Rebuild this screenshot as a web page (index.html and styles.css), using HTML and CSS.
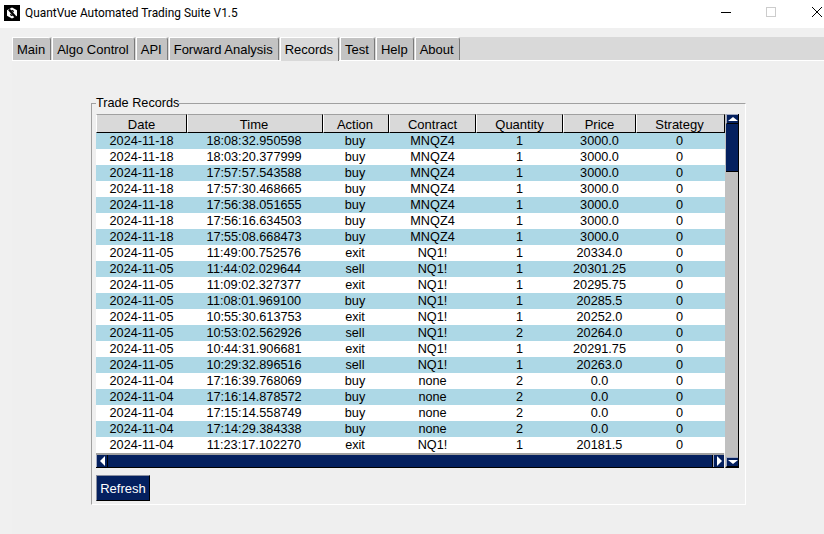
FILE: index.html
```html
<!DOCTYPE html>
<html lang="en">
<head>
<meta charset="utf-8">
<title>QuantVue Automated Trading Suite V1.5</title>
<link rel="stylesheet" href="styles.css">
</head>
<body>
<header class="titlebar">
  <svg class="app-icon" width="16" height="16" viewBox="0 0 16 16"><rect width="16" height="16" fill="#000"/><path d="M8 2.5 13 5.2V10.8L8 13.5 3 10.8V5.2Z" fill="#fff"/><path d="M5 4.5 11.5 12" stroke="#000" stroke-width="2.2"/><path d="M6.2 8.6V10.2L8 11.2 9 10.6Z M9.8 7.4V5.8L8 4.8 7 5.4Z" fill="#000"/></svg>
  <span class="title-text">QuantVue Automated Trading Suite V1.5</span>
  <div class="win-controls">
    <svg class="win-btn" width="12" height="12" viewBox="0 0 12 12"><path d="M1 6.5H11" stroke="#000"/></svg>
    <svg class="win-btn win-btn-max" width="12" height="12" viewBox="0 0 12 12"><rect x="1.5" y="1.5" width="9" height="9" fill="none" stroke="#ccc"/></svg>
    <svg class="win-btn" width="12" height="12" viewBox="0 0 12 12"><path d="M1 1 11 11M11 1 1 11" stroke="#000"/></svg>
  </div>
</header>
<main class="app">
  <nav class="tabs">
    <span class="tab">Main</span>
    <span class="tab">Algo Control</span>
    <span class="tab">API</span>
    <span class="tab">Forward Analysis</span>
    <span class="tab tab-active">Records</span>
    <span class="tab">Test</span>
    <span class="tab">Help</span>
    <span class="tab">About</span>
  </nav>
  <section class="panel">
    <fieldset class="frame">
      <legend class="frame-label">Trade Records</legend>
      <div class="table-area">
        <div class="table-side">
          <table class="records">
            <colgroup>
              <col class="c-date"><col class="c-time"><col class="c-action"><col class="c-contract"><col class="c-qty"><col class="c-price"><col class="c-strategy">
            </colgroup>
            <thead>
              <tr><th>Date</th><th>Time</th><th>Action</th><th>Contract</th><th>Quantity</th><th>Price</th><th>Strategy</th></tr>
            </thead>
            <tbody>
              <tr><td>2024-11-18</td><td>18:08:32.950598</td><td>buy</td><td>MNQZ4</td><td>1</td><td>3000.0</td><td>0</td></tr>
              <tr><td>2024-11-18</td><td>18:03:20.377999</td><td>buy</td><td>MNQZ4</td><td>1</td><td>3000.0</td><td>0</td></tr>
              <tr><td>2024-11-18</td><td>17:57:57.543588</td><td>buy</td><td>MNQZ4</td><td>1</td><td>3000.0</td><td>0</td></tr>
              <tr><td>2024-11-18</td><td>17:57:30.468665</td><td>buy</td><td>MNQZ4</td><td>1</td><td>3000.0</td><td>0</td></tr>
              <tr><td>2024-11-18</td><td>17:56:38.051655</td><td>buy</td><td>MNQZ4</td><td>1</td><td>3000.0</td><td>0</td></tr>
              <tr><td>2024-11-18</td><td>17:56:16.634503</td><td>buy</td><td>MNQZ4</td><td>1</td><td>3000.0</td><td>0</td></tr>
              <tr><td>2024-11-18</td><td>17:55:08.668473</td><td>buy</td><td>MNQZ4</td><td>1</td><td>3000.0</td><td>0</td></tr>
              <tr><td>2024-11-05</td><td>11:49:00.752576</td><td>exit</td><td>NQ1!</td><td>1</td><td>20334.0</td><td>0</td></tr>
              <tr><td>2024-11-05</td><td>11:44:02.029644</td><td>sell</td><td>NQ1!</td><td>1</td><td>20301.25</td><td>0</td></tr>
              <tr><td>2024-11-05</td><td>11:09:02.327377</td><td>exit</td><td>NQ1!</td><td>1</td><td>20295.75</td><td>0</td></tr>
              <tr><td>2024-11-05</td><td>11:08:01.969100</td><td>buy</td><td>NQ1!</td><td>1</td><td>20285.5</td><td>0</td></tr>
              <tr><td>2024-11-05</td><td>10:55:30.613753</td><td>exit</td><td>NQ1!</td><td>1</td><td>20252.0</td><td>0</td></tr>
              <tr><td>2024-11-05</td><td>10:53:02.562926</td><td>sell</td><td>NQ1!</td><td>2</td><td>20264.0</td><td>0</td></tr>
              <tr><td>2024-11-05</td><td>10:44:31.906681</td><td>exit</td><td>NQ1!</td><td>1</td><td>20291.75</td><td>0</td></tr>
              <tr><td>2024-11-05</td><td>10:29:32.896516</td><td>sell</td><td>NQ1!</td><td>1</td><td>20263.0</td><td>0</td></tr>
              <tr><td>2024-11-04</td><td>17:16:39.768069</td><td>buy</td><td>none</td><td>2</td><td>0.0</td><td>0</td></tr>
              <tr><td>2024-11-04</td><td>17:16:14.878572</td><td>buy</td><td>none</td><td>2</td><td>0.0</td><td>0</td></tr>
              <tr><td>2024-11-04</td><td>17:15:14.558749</td><td>buy</td><td>none</td><td>2</td><td>0.0</td><td>0</td></tr>
              <tr><td>2024-11-04</td><td>17:14:29.384338</td><td>buy</td><td>none</td><td>2</td><td>0.0</td><td>0</td></tr>
              <tr><td>2024-11-04</td><td>11:23:17.102270</td><td>exit</td><td>NQ1!</td><td>1</td><td>20181.5</td><td>0</td></tr>
            </tbody>
          </table>
          <div class="hscroll">
            <span class="sb-btn sb-btn-h"><span class="arrow arrow-left"></span></span>
            <span class="h-thumb"></span>
            <span class="sb-btn sb-btn-h"><span class="arrow arrow-right"></span></span>
          </div>
        </div>
        <div class="vscroll">
          <span class="sb-btn sb-btn-v"><span class="arrow arrow-up"></span></span>
          <span class="v-thumb"></span>
          <span class="v-trough"></span>
          <span class="sb-btn sb-btn-v"><span class="arrow arrow-down"></span></span>
        </div>
      </div>
      <button class="refresh" type="button">Refresh</button>
    </fieldset>
  </section>
</main>
</body>
</html>
```
FILE: styles.css
```css
* { box-sizing: border-box; }
html, body { margin: 0; height: 100%; overflow: hidden; }
body {
  width: 824px;
  height: 534px;
  background: #f0f0f0;
  font-family: "Liberation Sans", Arial, sans-serif;
  font-size: 13px;
  color: #000;
  display: flex;
  flex-direction: column;
}
.titlebar {
  height: 28px;
  background: #fff;
  display: flex;
  align-items: center;
  padding-left: 4px;
  flex: none;
}
.app-icon { margin-right: 5px; flex: none; margin-top: -2px; }
.title-text { font-family: Roboto, "Liberation Sans", sans-serif; font-size: 11.9px; margin-top: -3px; }
.win-controls { margin-left: auto; display: flex; height: 100%; align-items: flex-start; padding-top: 6px; }
.win-btn { display: block; }
.win-controls .win-btn { margin-left: 34px; }
.win-controls .win-btn-max { margin-left: 33px; }
.win-controls .win-btn:last-child { margin-right: 1px; }
.app { flex: 1; display: flex; flex-direction: column; padding-left: 12px; padding-top: 9px; min-height: 0; }
.tabs {
  display: flex;
  height: 23px;
  flex: none;
  background: #d9d9d9;
  position: relative;
  z-index: 1;
}
.tab {
  height: 23px;
  padding: 0 5px 0 4px;
  margin-right: 1px;
  background: #c3c3c3;
  border-top: 1px solid #fff;
  border-left: 1px solid #fff;
  border-right: 1px solid #7a7a7a;
  border-top-right-radius: 3px;
  font-size: 13px;
  line-height: 24px;
  white-space: nowrap;
}
.tab-active { background: #d9d9d9; height: 24px; position: relative; }
.panel { flex: 1; background: #efefef; border-top: 1px solid #fff; padding: 35px 0 0 79px; min-height: 0; }
.frame {
  margin: 0;
  width: 655px;
  height: 409px;
  padding: 4px 5px 0 5px;
  border: 1px solid #a0a0a0;
  border-right-color: #fff;
  border-bottom-color: #fff;
  min-width: 0;
}
.frame-label { padding: 0; margin: 0 0 0 -1px; font-size: 12.7px; line-height: 14px; }
.table-area { display: flex; height: 354px; margin-left: -1px; }
.table-side { width: 629px; display: flex; flex-direction: column; }
.records {
  width: 629px;
  table-layout: fixed;
  border-collapse: separate;
  border-spacing: 0;
  background: #fff;
  font-size: 12.7px;
}
.c-date { width: 91px; }
.c-time { width: 136px; }
.c-action { width: 66px; }
.c-contract { width: 87px; }
.c-qty { width: 87px; }
.c-price { width: 73px; }
.c-strategy { width: 89px; }
.records th {
  height: 18px;
  padding: 2px 0 0;
  font-weight: normal;
  font-size: 13px;
  background: #d9d9d9;
  border-top: 1px solid #a0a0a0;
  border-left: 1px solid #fff;
  border-right: 1px solid #000;
  border-bottom: 1px solid #000;
  line-height: 15px;
}
.records td {
  height: 16px;
  padding: 0;
  text-align: center;
  line-height: 16px;
  white-space: nowrap;
}
.records th:nth-child(2), .records td:nth-child(2),
.records th:nth-child(3), .records td:nth-child(3),
.records th:nth-child(7), .records td:nth-child(7) { padding-right: 2px; }
.records tbody tr:nth-child(odd) td { background: #add8e6; }
.hscroll {
  margin-top: auto;
  margin-right: 1px;
  height: 15px;
  display: flex;
  border-top: 2px solid #a0a0a0;
  border-bottom: 1px solid #000;
  background: #04205f;
}
.h-thumb { flex: 1; background: #04205f; border-left: 1px solid #000; border-right: 1px solid #000; }
.sb-btn { display: flex; align-items: center; justify-content: center; background: #04205f; flex: none; }
.sb-btn-h { width: 11px; border-left: 1px solid #a0a8c0; }
.sb-btn-v { height: 10px; border-top: 1px solid #a0a8c0; border-left: 1px solid #a0a8c0; border-bottom: 1px solid #000; }
.arrow { width: 0; height: 0; border-style: solid; border-color: transparent; display: block; }
.arrow-left { border-width: 5px 5px 5px 0; border-right-color: #fff; }
.arrow-right { border-width: 5px 0 5px 5px; border-left-color: #fff; }
.arrow-up { border-width: 0 5px 4px 5px; border-bottom-color: #fff; }
.arrow-down { border-width: 4px 5px 0 5px; border-top-color: #fff; }
.vscroll {
  width: 14px;
  height: 354px;
  display: flex;
  flex-direction: column;
  background: #c0c0c0;
  border-right: 1px solid #000;
  border-left: 1px solid #c0c0c0;
  border-bottom: 1px solid #000;
}
.v-thumb { height: 48px; background: #04205f; border-bottom: 1px solid #000; flex: none; }
.v-trough { flex: 1; }
.refresh {
  display: block;
  width: 54px;
  height: 26px;
  margin-top: 7px;
  margin-left: -1px;
  padding: 0;
  background: #04205f;
  color: #fff;
  border: 1px solid #000;
  border-top-color: #8a8fa0;
  border-left-color: #8a8fa0;
  font-family: inherit;
  font-size: 13px;
}
```
